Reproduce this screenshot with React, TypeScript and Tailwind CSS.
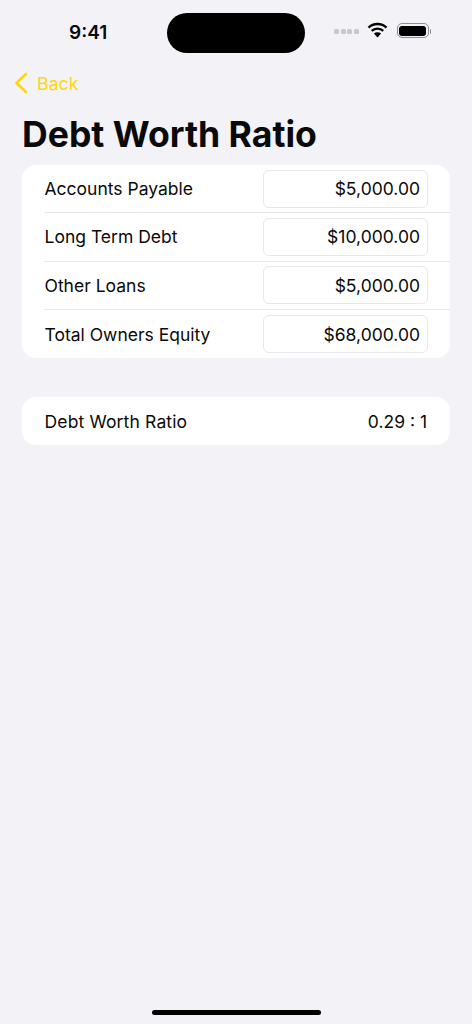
const FONT = "font-['Inter','Liberation_Sans',sans-serif]";

const inputRows = [
  { label: "Accounts Payable", value: "$5,000.00" },
  { label: "Long Term Debt", value: "$10,000.00" },
  { label: "Other Loans", value: "$5,000.00" },
  { label: "Total Owners Equity", value: "$68,000.00" },
];

function StatusBar() {
  return (
    <div className="relative flex h-[64px] items-start">
      <span className="ml-[69px] mt-[21px] text-[19px] leading-[24px] font-semibold text-[#0a0a0a]">9:41</span>
      <div className="absolute left-[167px] top-[13px] h-[40px] w-[138px] rounded-[20px] bg-black" />
      <div className="ml-auto mr-[41px] mt-[24px] flex items-center">
        <div className="flex gap-[1.5px]">
          {[0, 1, 2, 3].map((i) => (
            <span key={i} className="h-[5px] w-[5px] rounded-[1.5px] bg-[#c8c8cc]" />
          ))}
        </div>
        <svg width="21" height="16" viewBox="0 0 21 16" className="ml-[8px] -mt-[3px]" fill="none">
          <path d="M1.5 5.6a13 13 0 0 1 18 0" stroke="#000" strokeWidth="2.4" />
          <path d="M4.7 8.9a8.6 8.6 0 0 1 11.6 0" stroke="#000" strokeWidth="2.4" />
          <path d="M10.5 15.5 6.9 11.6a5.2 5.2 0 0 1 7.2 0z" fill="#000" />
        </svg>
        <div className="ml-[9px] -mt-[1px] flex h-[15px] w-[32px] items-center rounded-[5px] border border-[#8e8e93] p-[1.5px]">
          <div className="h-full w-full rounded-[3px] bg-black" />
        </div>
        <div className="ml-[1px] h-[5px] w-[1.5px] rounded-r-[1px] bg-[#8e8e93]" />
      </div>
    </div>
  );
}

function BackLink() {
  return (
    <div className="flex h-[38px] items-center pl-[14px]">
      <svg width="14" height="22" viewBox="0 0 14 22" fill="none">
        <path d="M12 2 2.5 11l9.5 9" stroke="#ffd60a" strokeWidth="2.6" strokeLinecap="round" strokeLinejoin="round" />
      </svg>
      <span className="ml-[9px] mt-[1px] text-[17.8px] leading-[24px] text-[#ffd60a]">Back</span>
    </div>
  );
}

export default function App() {
  return (
    <div className={`${FONT} relative flex h-[1024px] w-[472px] flex-col overflow-hidden bg-[#f2f2f7] text-black`}>
      <StatusBar />
      <BackLink />
      <h1 className="mt-[4px] h-[59px] pl-[22px] pt-[1px] text-[35.6px] leading-[56px] font-bold text-[#0a0a0a]">Debt Worth Ratio</h1>

      <div className="mx-[22px] rounded-[14px] bg-white">
        {inputRows.map((row, i) => (
          <div key={row.label} className="pl-[22px]">
            <div className={`flex h-[48.33px] items-center pr-[22px] ${i < inputRows.length - 1 ? "border-b border-[#e5e5ea]" : ""}`}>
              <span className="pl-[0.5px] pt-[1px] text-[17.5px] text-[#0a0a0a]">{row.label}</span>
              <div className="ml-auto flex h-[38px] w-[165px] items-center justify-end rounded-[6px] border border-[#e8e8ec] pr-[7px] pt-[1px] text-[17.5px] text-[#0a0a0a]">
                {row.value}
              </div>
            </div>
          </div>
        ))}
      </div>

      <div className="mx-[22px] mt-[39px] flex h-[48px] items-center justify-between rounded-[14px] bg-white px-[22px] pt-[1px] text-[17.5px] text-[#0a0a0a]">
        <span className="pl-[0.5px] tracking-[0.15px]">Debt Worth Ratio</span>
        <span className="mr-[1px]">0.29 : 1</span>
      </div>

      <div className="absolute bottom-[9px] left-[152px] h-[5px] w-[169px] rounded-full bg-black" />
    </div>
  );
}
